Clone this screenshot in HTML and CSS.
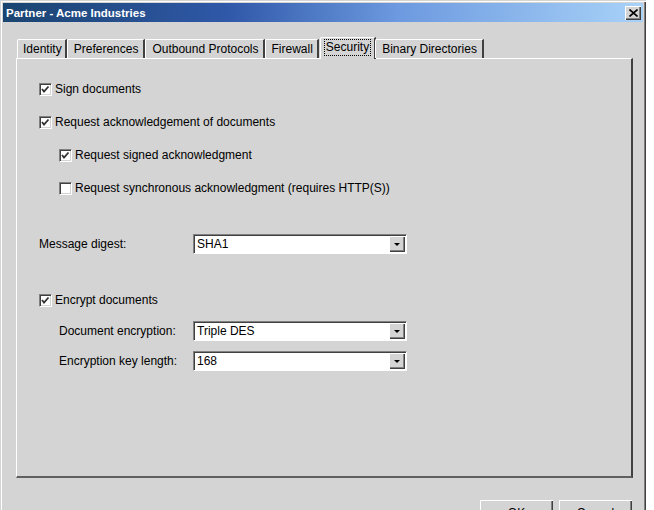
FILE: index.html
```html
<!DOCTYPE html>
<html lang="en">
<head>
  <meta charset="UTF-8" />
  <title>Partner - Acme Industries</title>
  <link rel="stylesheet" href="styles.css">
</head>
<body>
  <div class="window">
    <div class="titlebar">
      <span class="title">Partner - Acme Industries</span>
      <span class="close-btn">
        <svg width="9" height="8" viewBox="0 0 9 8"><path d="M0.5 0.5 L8.5 7.5 M8.5 0.5 L0.5 7.5" stroke="#000" stroke-width="1.6"/></svg>
      </span>
    </div>

    <div class="tabs">
      <div class="tab first">Identity</div>
      <div class="tab wide">Preferences</div>
      <div class="tab wide">Outbound Protocols</div>
      <div class="tab">Firewall</div>
      <div class="tab selected"><span class="focus">Security</span></div>
      <div class="tab wide">Binary Directories</div>
    </div>

    <div class="panel">
      <label class="check-row">
        <span class="checkbox checked"></span>Sign documents
      </label>
      <label class="check-row">
        <span class="checkbox checked"></span>Request acknowledgement of documents
      </label>
      <label class="check-row indent">
        <span class="checkbox checked"></span>Request signed acknowledgment
      </label>
      <label class="check-row indent">
        <span class="checkbox"></span>Request synchronous acknowledgment (requires HTTP(S))
      </label>

      <div class="field-row digest">
        <span class="field-label">Message digest:</span>
        <div class="combo"><span class="combo-value">SHA1</span><span class="combo-btn"></span></div>
      </div>

      <label class="check-row encrypt">
        <span class="checkbox checked"></span>Encrypt documents
      </label>
      <div class="field-row sub">
        <span class="field-label">Document encryption:</span>
        <div class="combo"><span class="combo-value">Triple DES</span><span class="combo-btn"></span></div>
      </div>
      <div class="field-row sub tight">
        <span class="field-label">Encryption key length:</span>
        <div class="combo"><span class="combo-value">168</span><span class="combo-btn"></span></div>
      </div>
    </div>

    <div class="buttons">
      <button class="btn">OK</button>
      <button class="btn">Cancel</button>
    </div>
  </div>
</body>
</html>
```

FILE: styles.css
```css
* {
  margin: 0;
  padding: 0;
  box-sizing: border-box;
}

body {
  background: #ffffff;
  font-family: 'Liberation Sans', Arial, sans-serif;
  font-size: 12px;
  color: #000;
  overflow: hidden;
}

.window {
  width: 646px;
  height: 560px;
  padding: 3px;
  background: #d4d4d4;
  box-shadow: inset 1px 1px #d4d4d4, inset 2px 2px #ffffff,
              inset -1px -1px #404040, inset -2px -2px #808080;
}

/* title bar */
.titlebar {
  height: 19px;
  display: flex;
  align-items: center;
  justify-content: space-between;
  padding: 0 2px 0 3px;
  background: linear-gradient(to right, #1a4470 0%, #2f58a8 35%, #6d9ae0 62%, #a8d2f8 100%);
}

.title {
  color: #fff;
  font-weight: bold;
  font-size: 11.5px;
}

.close-btn {
  width: 16px;
  height: 14px;
  display: flex;
  align-items: center;
  justify-content: center;
  background: #d4d4d4;
  box-shadow: inset 1px 1px #ffffff, inset -1px -1px #404040, inset -2px -2px #808080;
}

/* tabs */
.tabs {
  display: flex;
  align-items: flex-end;
  height: 21px;
  margin: 15px 0 0 14px;
  position: relative;
  z-index: 1;
}

.tab {
  height: 19px;
  padding: 0 4px 0 5px;
  line-height: 18px;
  white-space: nowrap;
  border-top: 1px solid #fff;
  border-left: 1px solid #fff;
  border-right: 2px solid #404040;
  border-top-left-radius: 2px;
}

.tab.first {
  padding: 0 3px 0 5px;
}

.tab.wide {
  padding: 0 5px 0 6px;
}

.tab.selected {
  height: 22px;
  margin: 0 -1px -1px 1px;
  padding: 1px 3px 0 3px;
  line-height: 16px;
  background: #d4d4d4;
}

.focus {
  display: inline-block;
  padding: 0 1px;
  border: 1px dotted #000;
  line-height: 15px;
}

/* panel */
.panel {
  width: 617px;
  height: 420px;
  margin-left: 13px;
  padding: 20px 0 0 22px;
  border-top: 1px solid #fff;
  border-left: 1px solid #fff;
  border-right: 2px solid #404040;
  border-bottom: 2px solid #606060;
}

.check-row {
  display: flex;
  align-items: center;
  height: 20px;
  margin-bottom: 13px;
}

.check-row.indent {
  margin-left: 20px;
}

.checkbox {
  width: 13px;
  height: 13px;
  margin-right: 3px;
  background: #fff;
  border-top: 1px solid #808080;
  border-left: 1px solid #808080;
  border-right: 1px solid #fff;
  border-bottom: 1px solid #fff;
  box-shadow: inset 1px 1px #404040, inset -1px -1px #d4d4d4;
}

.checkbox.checked {
  background: #fff url("data:image/svg+xml;utf8,<svg xmlns='http://www.w3.org/2000/svg' width='11' height='11'><polyline points='2,5 4,7.5 8.5,2.5' fill='none' stroke='%23303030' stroke-width='1.8'/></svg>") no-repeat 0 0;
}

.field-row {
  display: flex;
  align-items: center;
  height: 20px;
}

/* margins collapse with the row above, so these are the full gaps */
.field-row.digest {
  margin-top: 36px;
}

.field-label {
  width: 154px;
}

.field-row.sub {
  margin-left: 20px;
}

.field-row.sub .field-label {
  width: 134px;
}

.field-row.tight {
  margin-top: 10px;
}

.check-row.encrypt {
  margin-top: 36px;
  margin-bottom: 11px;
}

.combo {
  width: 214px;
  height: 20px;
  display: flex;
  align-items: center;
  justify-content: space-between;
  background: #fff;
  border-top: 1px solid #808080;
  border-left: 1px solid #808080;
  border-right: 1px solid #fff;
  border-bottom: 1px solid #fff;
  box-shadow: inset 1px 1px #404040;
  padding: 0 1px 0 3px;
}

.combo-btn {
  width: 16px;
  height: 16px;
  background: #d4d4d4;
  box-shadow: inset 1px 1px #ffffff, inset -1px -1px #404040, inset -2px -2px #808080;
  display: flex;
  align-items: center;
  justify-content: center;
}

.combo-btn::after {
  content: "";
  border-left: 3px solid transparent;
  border-right: 3px solid transparent;
  border-top: 3px solid #000;
  margin-top: 1px;
}

/* bottom buttons */
.buttons {
  display: flex;
  justify-content: flex-end;
  gap: 6px;
  margin: 22px 11px 0 0;
}

.btn {
  width: 73px;
  height: 24px;
  font-family: inherit;
  font-size: 12px;
  padding-top: 2px;
  background: #d4d4d4;
  border: none;
  box-shadow: inset 1px 1px #ffffff, inset -1px -1px #404040, inset -2px -2px #808080;
}
```
